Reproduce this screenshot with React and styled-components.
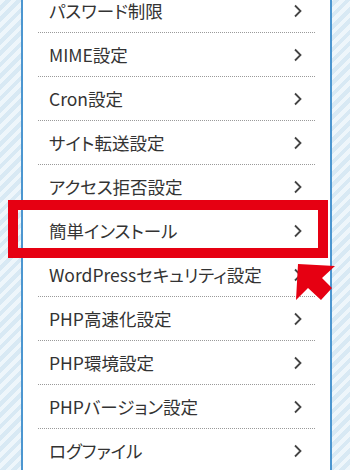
import React from 'react';
import styled, { createGlobalStyle } from 'styled-components';

const GlobalStyle = createGlobalStyle`
  html, body {
    margin: 0;
    padding: 0;
  }
  body {
    font-family: "Noto Sans CJK JP", "Noto Sans", sans-serif;
  }
`;

const Page = styled.div`
  position: relative;
  width: 350px;
  height: 470px;
  overflow: hidden;
  display: flex;
  padding-left: 21px;
  box-sizing: border-box;
  background: repeating-linear-gradient(
    135deg,
    #eef6fb 0 4px,
    #d8e9f4 4px 8px
  );
`;

const Panel = styled.div`
  width: 307px;
  background: #fff;
  border-left: 2px solid #4c96d0;
  border-right: 2px solid #4c96d0;
`;

const MenuList = styled.ul`
  list-style: none;
  margin: -11px 0 0;
  padding: 0;
`;

const MenuItem = styled.li`
  position: relative;
  height: 44px;
  margin: 0 15px 0 15px;
  padding: 0 12px 0 11px;
  display: flex;
  align-items: center;
  justify-content: space-between;
  border-bottom: 1px dotted #9a9a9a;
  box-sizing: border-box;
`;

const Label = styled.span`
  font-size: 17.5px;
  color: #333;
  font-feature-settings: "palt";
`;

const Highlight = styled.div`
  position: absolute;
  top: -9px;
  bottom: -6px;
  left: -30px;
  right: -13px;
  border: 10px solid #e60012;
  pointer-events: none;
`;

const Pointer = styled.svg`
  position: absolute;
  left: 290px;
  top: 257px;
  width: 50px;
  height: 50px;
`;

const Chevron = () => (
  <svg width="10" height="14" viewBox="0 0 10 14">
    <path d="M2 1.5 L7.5 7 L2 12.5" fill="none" stroke="#444" strokeWidth="1.8" />
  </svg>
);

const items = [
  'パスワード制限',
  'MIME設定',
  'Cron設定',
  'サイト転送設定',
  'アクセス拒否設定',
  '簡単インストール',
  'WordPressセキュリティ設定',
  'PHP高速化設定',
  'PHP環境設定',
  'PHPバージョン設定',
  'ログファイル',
];

const App = () => (
  <>
    <GlobalStyle />
    <Page>
      <Panel>
        <MenuList>
          {items.map((label) => (
            <MenuItem key={label}>
              <Label>{label}</Label>
              <Chevron />
              {label === '簡単インストール' && <Highlight />}
            </MenuItem>
          ))}
        </MenuList>
      </Panel>
      <Pointer viewBox="0 0 50 50">
        <polygon
          points="8,7 45,9 32,21 42,31 31,43 18,31 6,43"
          fill="#e60012"
        />
      </Pointer>
    </Page>
  </>
);

export default App;
